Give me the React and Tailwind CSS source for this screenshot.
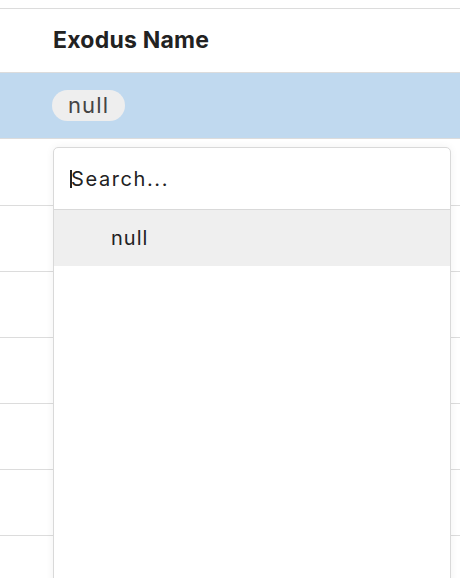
import React from 'react';

const rows = [67, 66, 66, 66, 66, 66];

export default function App() {
  return (
    <div className="relative w-[460px] h-[578px] overflow-hidden bg-white" style={{ fontFamily: 'Inter, "Noto Sans", sans-serif' }}>
      <div className="h-2" />
      {/* Table */}
      <div className="border-t border-[#dcdcdc]">
        <div className="h-[64px] flex items-center pl-[53px] border-b border-[#dcdcdc]">
          <span className="text-[23px] font-bold text-[#222] tracking-[0.01em]">Exodus Name</span>
        </div>
        <div className="h-[66px] flex items-center pl-[52px] bg-[#c0d9ef] border-b border-[#dcdcdc]">
          <span className="inline-flex items-center h-[31px] px-[16px] rounded-full bg-[#eeeeee] text-[22px] text-[#444] tracking-[0.05em]">null</span>
        </div>
        {rows.map((h, i) => (
          <div key={i} className={i === 0 ? 'h-[67px] border-b border-[#dcdcdc]' : 'h-[66px] border-b border-[#dcdcdc]'} />
        ))}
      </div>

      {/* Dropdown */}
      <div className="absolute left-[53px] top-[147px] w-[398px] h-[460px] bg-white border border-[#d9d9d9] rounded-[5px] shadow-[0_0_8px_rgba(0,0,0,0.06)]">
        <div className="h-[62px] flex items-center pl-[16px] border-b border-[#d9d9d9]">
          <span className="w-[2px] h-[18px] bg-[#222]" />
          <span className="text-[20px] text-[#222] -ml-[1px] tracking-[0.08em]">Search...</span>
        </div>
        <div className="h-[56px] flex items-center pl-[57px] bg-[#efefef]">
          <span className="text-[20px] text-[#222] tracking-[0.05em]">null</span>
        </div>
      </div>
    </div>
  );
}
